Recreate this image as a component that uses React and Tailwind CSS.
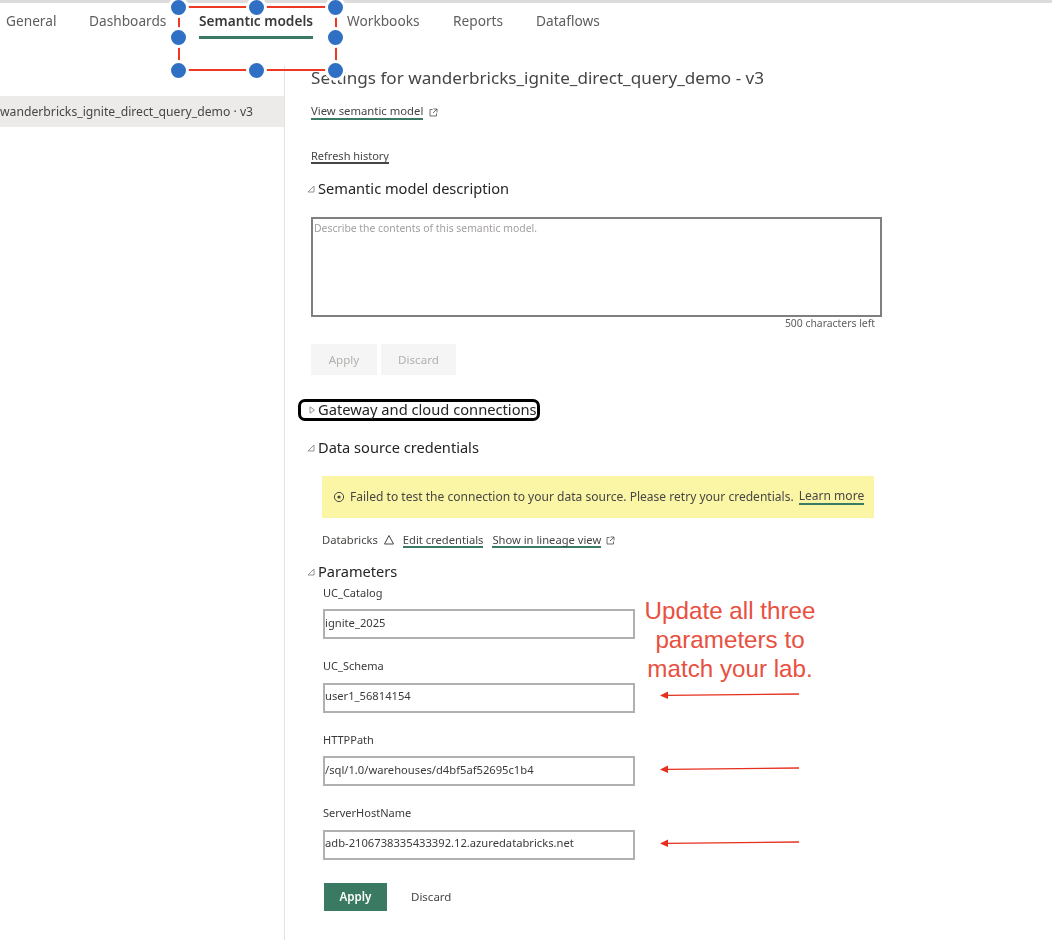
import React from "react";

const tabs = ["General", "Dashboards", "Semantic models", "Workbooks", "Reports", "Dataflows"];

const params = [
  { name: "UC_Catalog", value: "ignite_2025" },
  { name: "UC_Schema", value: "user1_56814154" },
  { name: "HTTPPath", value: "/sql/1.0/warehouses/d4bf5af52695c1b4" },
  { name: "ServerHostName", value: "adb-2106738335433392.12.azuredatabricks.net" },
];

function Caret({ open = true }) {
  return (
    <svg width="8" height="8" viewBox="0 0 8 8" className="shrink-0" fill="none" stroke="#8a8886" strokeWidth="0.9">
      {open ? <path d="M7 1 L7 7 L1 7 Z" /> : <path d="M2 0.8 L6.5 4 L2 7.2 Z" />}
    </svg>
  );
}

function ExternalIcon() {
  return (
    <svg width="9" height="9" viewBox="0 0 9 9" className="shrink-0" fill="none" stroke="#605e5c" strokeWidth="0.9">
      <path d="M3.5 1.5 H1 V8 H7.5 V5.5 M4.5 1 H8 V4.5 M8 1 L4 5" />
    </svg>
  );
}

function SectionHeading({ title, open = true }) {
  return (
    <div className="h-[22px] flex items-center gap-[3px] -ml-[4px] text-[14.6px] text-[#252423] leading-none">
      <Caret open={open} />
      <span className="pb-[2px]">{title}</span>
    </div>
  );
}

function Field({ name, value }) {
  return (
    <div className="h-[73.5px] ml-[12px]">
      <div className="h-[20px] flex items-center text-[11px] text-[#3b3a39]">{name}</div>
      <input
        readOnly
        defaultValue={value}
        className="mt-[6px] w-[312px] h-[30px] border-2 border-[#b0b0b0] pb-[4px] text-[11.2px] text-[#3b3a39] outline-none"
      />
    </div>
  );
}

function Arrow({ className }) {
  return (
    <svg width="142" height="10" viewBox="0 0 142 10" className={"absolute left-[659px] " + className}>
      <path d="M8 5.4 L140 4" stroke="#e62f1c" strokeWidth="1.3" fill="none" />
      <path d="M1 5.4 L9 1.6 L9 9 Z" fill="#e62f1c" />
    </svg>
  );
}

function Handle({ className }) {
  return <div className={"absolute w-[21px] h-[21px] rounded-full bg-[#2f6fc4] border-[3px] border-white " + className} />;
}

export default function App() {
  return (
    <div className="relative w-[1052px] h-[940px] bg-white overflow-hidden font-['Noto_Sans',sans-serif]">
      <div className="blur-[0.7px] h-full">
        <div className="h-[3px] bg-[#dcdcdc]" />
        <div className="h-[63px] flex pl-[6px] pt-[8px] text-[13.7px] text-[#605e5c]">
          {tabs.map((t, i) => (
            <div key={t} className={i === 0 ? "w-[83px]" : i === 1 ? "w-[110px]" : i === 2 ? "w-[148px]" : i === 3 ? "w-[106px]" : i === 4 ? "w-[83px]" : ""}>
              <div className={i === 2 ? "inline-block h-[28px] border-b-[3px] border-[#3a7a63] font-semibold text-[#3b3a39]" : "h-[28px]"}>{t}</div>
            </div>
          ))}
        </div>

        <div className="flex h-[874px]">
          <aside className="w-[285px] shrink-0 border-r border-[#e3e3e3] pt-[30px]">
            <div className="h-[31px] bg-[#edebe9] flex items-center pt-[1px] text-[12.2px] text-[#484644] whitespace-nowrap overflow-hidden">
              wanderbricks_ignite_direct_query_demo · v3
            </div>
          </aside>

          <main className="flex-1 pl-[26px]">
            <h1 className="h-[24px] flex items-center text-[17.1px] text-[#484644] whitespace-nowrap leading-none">
              Settings for wanderbricks_ignite_direct_query_demo - v3
            </h1>

            <div className="mt-[12px] h-[20px] flex items-center gap-[6px] text-[11.3px] text-[#484644]">
              <span className="border-b-2 border-[#3a7a63] leading-[14px]">View semantic model</span>
              <ExternalIcon />
            </div>

            <div className="mt-[24px] h-[20px] flex items-center text-[11px] text-[#484644]">
              <span className="border-b-2 border-[#484644] leading-[13px]">Refresh history</span>
            </div>

            <div className="mt-[12px]">
              <SectionHeading title="Semantic model description" />
            </div>

            <textarea
              readOnly
              placeholder="Describe the contents of this semantic model."
              className="block mt-[17px] w-[571px] h-[100px] border-2 border-[#807f7f] px-[1px] py-[2px] text-[10.4px] placeholder:text-[#a19f9d] outline-none resize-none"
            />
            <div className="w-[564px] h-[14px] flex items-center justify-end text-[10.4px] text-[#605e5c]">500 characters left</div>

            <div className="mt-[13px] h-[31px] flex gap-[4px] text-[11.6px] text-[#b3b0ad]">
              <button className="w-[66px] bg-[#f5f5f5]">Apply</button>
              <button className="w-[75px] bg-[#f5f5f5]">Discard</button>
            </div>

            <div className="mt-[24px] -ml-[13px] w-[242px] h-[22px] border-[3px] border-black rounded-[7px] flex items-center pl-[7px] gap-[2px] text-[14.7px] text-[#252423] whitespace-nowrap">
              <Caret open={false} />
              <span className="pb-[2px]">Gateway and cloud connections</span>
            </div>

            <div className="mt-[16px]">
              <SectionHeading title="Data source credentials" />
            </div>

            <div className="mt-[17px] ml-[11px] w-[552px] h-[42px] bg-[#faf6a6] flex items-center pl-[11px] gap-[5px] text-[12.05px] text-[#484644] whitespace-nowrap">
              <svg width="12" height="12" viewBox="0 0 12 12" className="shrink-0" fill="none" stroke="#484644" strokeWidth="1">
                <circle cx="6" cy="6" r="4.6" />
                <circle cx="6" cy="6" r="1.6" fill="#484644" stroke="none" />
              </svg>
              <span>Failed to test the connection to your data source. Please retry your credentials.</span>
              <span className="border-b-2 border-[#3a7a63] leading-[14px]">Learn more</span>
            </div>

            <div className="mt-[12px] ml-[11px] h-[20px] flex items-center text-[11.2px] text-[#484644] whitespace-nowrap">
              <span>Databricks</span>
              <svg width="12" height="12" viewBox="0 0 12 12" className="ml-[5px] shrink-0" fill="none" stroke="#484644" strokeWidth="1">
                <path d="M6 1.5 L10.5 10 H1.5 Z" />
              </svg>
              <span className="ml-[8px] border-b-2 border-[#3a7a63] leading-[13px]">Edit credentials</span>
              <span className="ml-[9px] border-b-2 border-[#3a7a63] leading-[13px]">Show in lineage view</span>
              <span className="ml-[5px]"><ExternalIcon /></span>
            </div>

            <div className="mt-[11px]">
              <SectionHeading title="Parameters" />
            </div>

            {params.map((p) => (
              <Field key={p.name} name={p.name} value={p.value} />
            ))}

            <div className="mt-[6px] ml-[13px] h-[28px] flex items-center text-[11.6px]">
              <button className="w-[63px] h-full bg-[#3a7a63] text-white font-semibold">Apply</button>
              <button className="ml-[24px] text-[#484644] text-[11.5px]">Discard</button>
            </div>
          </main>
        </div>
      </div>

      {/* selection box drawn on top of the screenshot */}
      <div className="absolute left-[178px] top-[6px] w-[159px] h-[65px] border-2 border-[#ee3a24]" />
      <Handle className="left-[168px] -top-[3px]" />
      <Handle className="left-[246px] -top-[3px]" />
      <Handle className="left-[325px] -top-[3px]" />
      <Handle className="left-[168px] top-[27px]" />
      <Handle className="left-[325px] top-[27px]" />
      <Handle className="left-[168px] top-[60px]" />
      <Handle className="left-[246px] top-[60px]" />
      <Handle className="left-[325px] top-[60px]" />

      <div className="absolute left-[630px] top-[596px] w-[200px] text-center text-[24.2px] leading-[29px] text-[#e8503f] font-['Liberation_Sans',sans-serif]">
        Update all three parameters to match your lab.
      </div>
      <Arrow className="top-[690px]" />
      <Arrow className="top-[764px]" />
      <Arrow className="top-[838px]" />
    </div>
  );
}
